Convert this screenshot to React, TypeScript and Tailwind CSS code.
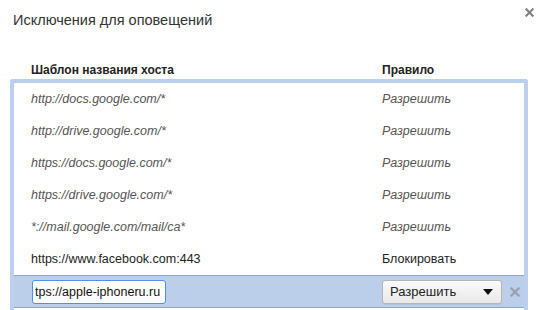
import React from "react";

type Rule = { pattern: string; setting: string; managed: boolean };

const rules: Rule[] = [
  { pattern: "http://docs.google.com/*", setting: "Разрешить", managed: true },
  { pattern: "http://drive.google.com/*", setting: "Разрешить", managed: true },
  { pattern: "https://docs.google.com/*", setting: "Разрешить", managed: true },
  { pattern: "https://drive.google.com/*", setting: "Разрешить", managed: true },
  { pattern: "*://mail.google.com/mail/ca*", setting: "Разрешить", managed: true },
  { pattern: "https://www.facebook.com:443", setting: "Блокировать", managed: false },
];

const CloseIcon: React.FC<{ className?: string }> = ({ className }) => (
  <svg viewBox="0 0 10 10" className={className}>
    <path d="M1.5 1.5 L8.5 8.5 M8.5 1.5 L1.5 8.5" stroke="currentColor" strokeWidth="2.4" strokeLinecap="square" />
  </svg>
);

const App: React.FC = () => {
  return (
    <div className="relative w-[540px] h-[310px] overflow-hidden bg-white font-['Liberation_Sans',Arial,sans-serif] text-[12.5px] text-[#333]">
      <button className="absolute right-[6px] top-[8px] w-[9px] h-[9px] text-[#808080]">
        <CloseIcon className="w-[9px] h-[9px]" />
      </button>

      <h1 className="pl-[13px] pt-[11px] text-[14.5px] leading-[18px] font-normal text-[#333]">
        Исключения для оповещений
      </h1>

      <div className="mt-[34px] flex pl-[31px] text-[12px] font-bold leading-[15px] text-[#222]">
        <div className="w-[351px]">Шаблон названия хоста</div>
        <div>Правило</div>
      </div>

      <div className="mt-[1px] ml-[10px] w-[518px] h-[240px] rounded-t-[3px] border-[4px] border-b-0 border-[#bccfef] bg-white">
        {rules.map((r) => (
          <div
            key={r.pattern}
            className={`flex h-[32px] items-center pl-[17px] ${r.managed ? "italic text-[#555]" : "text-[#222]"}`}
          >
            <div className="w-[351px]">{r.pattern}</div>
            <div>{r.setting}</div>
          </div>
        ))}

        <div className="flex h-[33px] items-center border-y border-[#8ea6cd] bg-[#bccfea] pl-[18px]">
          <div className="w-[350px]">
            <input
              readOnly
              value="tps://apple-iphoneru.ru"
              className="w-[134px] h-[24px] rounded-[3px] border border-[#4d8ff5] bg-white px-[2px] text-[12.5px] text-[#111] outline-none font-['Liberation_Sans',Arial,sans-serif]"
            />
          </div>
          <div className="flex h-[24px] w-[120px] items-center justify-between rounded-[3px] border border-[#b5b5b5] bg-gradient-to-b from-[#fafafa] to-[#e9e9e9] pl-[7px] pr-[8px] text-[13px] text-[#222] shadow-[0_1px_0_rgba(0,0,0,0.06)]">
            <span>Разрешить</span>
            <svg viewBox="0 0 10 6" className="w-[10px] h-[6px]">
              <path d="M0 0 H10 L5 6 Z" fill="#111" />
            </svg>
          </div>
          <CloseIcon className="ml-[8px] w-[10px] h-[10px] text-[#9aa3ad]" />
        </div>
      </div>
    </div>
  );
};

export default App;
